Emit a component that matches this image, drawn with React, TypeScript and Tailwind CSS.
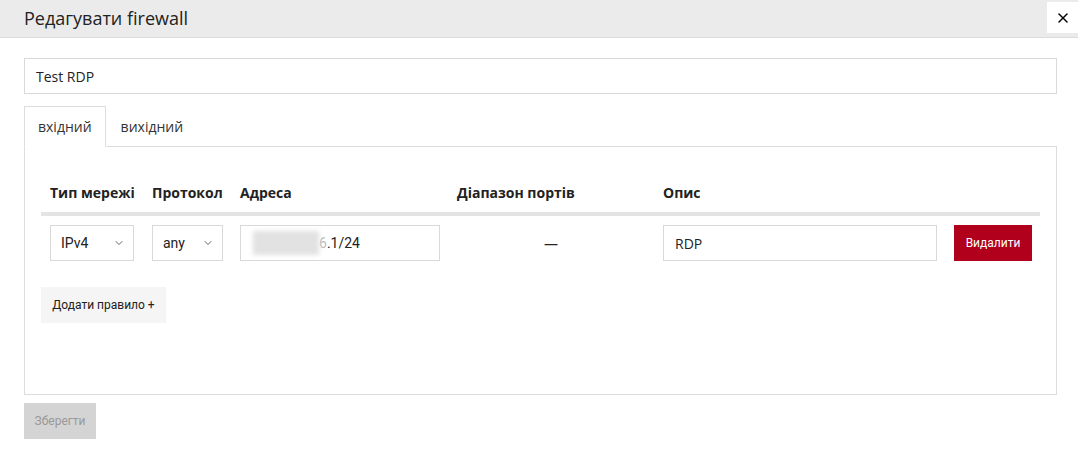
import React from 'react';
import { X, ChevronDown } from 'lucide-react';

// column widths of the rules table
const cols = 'grid grid-cols-[102px_88px_217px_206px_291px_96px]';

const headers = ['Тип мережі', 'Протокол', 'Адреса', 'Діапазон портів', 'Опис', ''];

const Select = ({ value, width }: { value: string; width: string }) => (
    <div
        className={`${width} h-[36px] border border-[#d9d9d9] bg-white flex items-center justify-between pl-[10px] pr-[8px] font-['Roboto'] text-[14px] text-[#222]`}
    >
        <span>{value}</span>
        <ChevronDown className="w-[12px] h-[12px] text-[#333]" strokeWidth={1.5} />
    </div>
);

export default function App() {
    return (
        <div className="w-[1078px] h-[450px] bg-white font-['Open_Sans',sans-serif] text-[#222]">
            {/* Header */}
            <div className="h-[38px] bg-[#ebebeb] border-b border-[#dcdcdc] flex justify-between">
                <h1 className="pl-6 pt-[6px] text-[18px] leading-[24px] text-[#222]">Редагувати firewall</h1>
                <button className="mt-[2px] w-[31px] h-[31px] bg-white flex items-center justify-center">
                    <X className="w-[16px] h-[16px] text-black" strokeWidth={2.25} />
                </button>
            </div>

            <div className="pl-6 pr-[21px] pt-[20px]">
                {/* Name */}
                <div className="h-[36px] border border-[#d9d9d9] flex items-center px-[11px] text-[14px]">Test RDP</div>

                {/* Tabs */}
                <div className="mt-[12px] flex relative z-10">
                    <div className="h-[41px] px-[13px] border border-[#dcdcdc] border-b-white bg-white flex items-center text-[14px] text-[#333]">
                        вхідний
                    </div>
                    <div className="h-[41px] px-[15px] flex items-center text-[14px] text-[#333]">вихідний</div>
                </div>

                {/* Panel */}
                <div className="-mt-px h-[249px] border border-[#dcdcdc] px-4 pt-[27px]">
                    <div className={cols}>
                        {headers.map((h, i) => (
                            <div key={i} className="p-[9px] text-[14px] leading-[20px] font-bold text-[#222] whitespace-nowrap">
                                {h}
                            </div>
                        ))}
                    </div>
                    <div className="h-[4px] bg-[#e4e4e4]" />
                    <div className={cols}>
                        <div className="p-[9px]">
                            <Select value="IPv4" width="w-[84px]" />
                        </div>
                        <div className="p-[9px]">
                            <Select value="any" width="w-[71px]" />
                        </div>
                        <div className="p-[9px]">
                            <div className="w-[200px] h-[36px] border border-[#d9d9d9] flex items-center pl-[12px] font-['Roboto'] text-[14px]">
                                <span className="w-[66px] h-[24px] bg-[#e2e2e2] blur-[2px]" />
                                <span className="text-[#bbb]">6</span>
                                <span>.1/24</span>
                            </div>
                        </div>
                        <div className="p-[9px] flex items-center justify-center text-[14px]">—</div>
                        <div className="p-[9px]">
                            <div className="w-[274px] h-[36px] border border-[#d9d9d9] flex items-center px-[11px] text-[14px]">RDP</div>
                        </div>
                        <div className="p-[9px]">
                            <button className="w-[78px] h-[36px] bg-[#b1001c] text-white font-['Roboto'] font-normal text-[12px]">Видалити</button>
                        </div>
                    </div>
                    <button className="mt-[17px] h-[36px] w-[125px] bg-[#f5f5f5] font-['Roboto'] font-normal text-[12px] text-[#222]">
                        Додати правило +
                    </button>
                </div>

                <button className="mt-[8px] h-[36px] w-[72px] bg-[#d4d4d4] font-['Roboto'] font-normal text-[12px] text-[#999]">Зберегти</button>
            </div>
        </div>
    );
}
